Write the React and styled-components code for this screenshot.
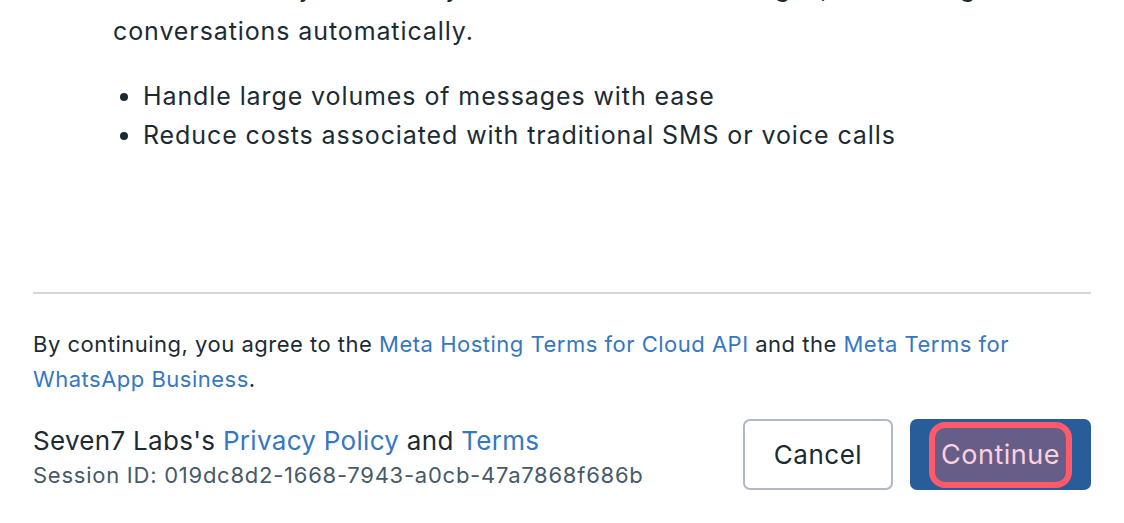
import React from "react";
import styled, { createGlobalStyle } from "styled-components";

const Global = createGlobalStyle`
  html, body { margin: 0; padding: 0; background: #ffffff; }
  body { overflow: hidden; }
`;

const Page = styled.div`
  width: 1124px;
  height: 523px;
  overflow: hidden;
  box-sizing: border-box;
  padding: 0 33px;
  display: flex;
  flex-direction: column;
  font-family: Inter, "Noto Sans", sans-serif;
  color: #1c2b33;
`;

const Body = styled.div`
  margin-top: -33px;
  padding-left: 80px;
  display: flex;
  flex-direction: column;
  gap: 24px;
  height: 325px;
`;

const Paragraph = styled.p`
  margin: 0;
  font-size: 25px;
  line-height: 43px;
  letter-spacing: 0.9px;
`;

const List = styled.ul`
  margin: 0;
  padding-left: 30px;
  font-size: 25px;
  line-height: 39px;
  letter-spacing: 0.9px;
`;

const Divider = styled.hr`
  margin: 0;
  border: none;
  height: 2px;
  background: #d3d6da;
`;

const Terms = styled.p`
  margin: 33px 0 0;
  font-size: 22px;
  line-height: 35px;
  letter-spacing: 0.5px;
`;

const Link = styled.a`
  color: #3677c1;
  text-decoration: none;
`;

const Footer = styled.div`
  margin-top: 22px;
  display: flex;
  align-items: center;
  justify-content: space-between;
`;

const Owner = styled.div`
  display: flex;
  flex-direction: column;
  font-family: Inter, "Liberation Sans", sans-serif;
`;

const OwnerLine = styled.div`
  font-size: 26px;
  line-height: 34px;
  letter-spacing: 0.3px;
`;

const Session = styled.div`
  font-size: 22px;
  line-height: 34px;
  letter-spacing: 0.75px;
  color: #465a69;
`;

const Actions = styled.div`
  display: flex;
  gap: 17px;
  margin-bottom: 6px;
`;

const Button = styled.button`
  box-sizing: border-box;
  height: 71px;
  border-radius: 7px;
  font-family: Inter, "Noto Sans", sans-serif;
  font-size: 26px;
  letter-spacing: 0.5px;
  display: flex;
  align-items: center;
  justify-content: center;
  padding: 0;
  cursor: pointer;
`;

const CancelButton = styled(Button)`
  width: 150px;
  background: #ffffff;
  border: 2px solid #b0b9c4;
  color: #1c2b33;
`;

const ContinueButton = styled(Button)`
  width: 181px;
  background: #285d99;
  border: none;
`;

const Focus = styled.span`
  box-sizing: border-box;
  width: 143px;
  height: 66px;
  display: flex;
  align-items: center;
  justify-content: center;
  border: 6px solid #ff5a69;
  border-radius: 16px;
  background: #675d89;
  color: #fbd2dc;
  font-size: 27px;
`;

export default function App() {
  return (
    <>
      <Global />
      <Page>
        <Body>
          <Paragraph>
            Cloud API lets you securely send and receive messages, and manage
            conversations automatically.
          </Paragraph>
          <List>
            <li>Handle large volumes of messages with ease</li>
            <li>Reduce costs associated with traditional SMS or voice calls</li>
          </List>
        </Body>
        <Divider />
        <Terms>
          By continuing, you agree to the{" "}
          <Link href="#">Meta Hosting Terms for Cloud API</Link> and the{" "}
          <Link href="#">Meta Terms for WhatsApp Business</Link>.
        </Terms>
        <Footer>
          <Owner>
            <OwnerLine>
              Seven7 Labs's <Link href="#">Privacy Policy</Link> and{" "}
              <Link href="#">Terms</Link>
            </OwnerLine>
            <Session>Session ID: 019dc8d2-1668-7943-a0cb-47a7868f686b</Session>
          </Owner>
          <Actions>
            <CancelButton>Cancel</CancelButton>
            <ContinueButton>
              <Focus>Continue</Focus>
            </ContinueButton>
          </Actions>
        </Footer>
      </Page>
    </>
  );
}
